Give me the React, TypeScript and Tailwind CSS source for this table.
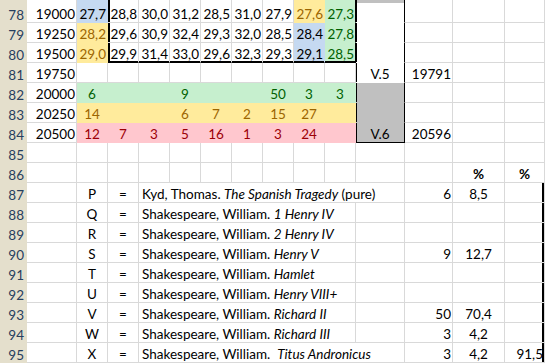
import React from 'react';

type Fill = 'n' | 'w' | 'b' | 'y' | 'g' | 'r' | 'k';
type Cell = {
  t?: React.ReactNode;
  a?: 'l' | 'r' | 'c';
  f?: Fill;
  s?: 7 | 8;
  bold?: boolean;
  rb?: boolean;
  bb?: boolean;
  sh?: string;
};

const BG: Record<Fill, string> = {
  n: 'bg-white',
  w: 'bg-white',
  b: 'bg-[#c5d9f1]',
  y: 'bg-[#ffeb9c]',
  g: 'bg-[#c6efce]',
  r: 'bg-[#ffc7ce]',
  k: 'bg-[#c0c0c0]',
};
const BR: Record<Fill, string> = {
  n: 'border-r-[#d9d9d9]',
  w: 'border-r-white',
  b: 'border-r-[#c5d9f1]',
  y: 'border-r-[#ffeb9c]',
  g: 'border-r-[#c6efce]',
  r: 'border-r-[#ffc7ce]',
  k: 'border-r-[#c0c0c0]',
};
const BB: Record<Fill, string> = {
  n: 'border-b-[#d9d9d9]',
  w: 'border-b-white',
  b: 'border-b-[#c5d9f1]',
  y: 'border-b-[#ffeb9c]',
  g: 'border-b-[#c6efce]',
  r: 'border-b-[#ffc7ce]',
  k: 'border-b-[#c0c0c0]',
};
const TC: Record<Fill, string> = {
  n: 'text-black',
  w: 'text-black',
  b: 'text-black',
  y: 'text-[#9c6500]',
  g: 'text-[#006100]',
  r: 'text-[#9c0006]',
  k: 'text-black',
};
const AL = {
  l: 'justify-start pl-[3px]',
  r: 'justify-end pr-[1px]',
  c: 'justify-center',
};
const SPAN = { 7: 'col-span-7', 8: 'col-span-8' };

const LEFT2 = 'shadow-[inset_2px_0_0_#000]';
const LEFT2B = 'shadow-[inset_2px_-1px_0_#000]';
const BOT1 = 'shadow-[inset_0_-1px_0_#000]';
const LEFT1 = 'shadow-[inset_1px_0_0_#000]';
const RIGHT2 = 'shadow-[inset_-2px_0_0_#000]';

const e = (): Cell => ({});

// Columns: B, C, D, E, F, G, H, I, J, K, L, M, N, O
const rows: { h: string; cells: Cell[] }[] = [
  {
    h: '',
    cells: [
      e(),
      { f: 'b' },
      { sh: LEFT2 },
      e(), e(), e(), e(), e(),
      { f: 'y' },
      { f: 'g', rb: true },
      { f: 'k', rb: true, sh: LEFT1 },
      e(), e(), e(),
    ],
  },
  {
    h: '78',
    cells: [
      { t: '19000', a: 'r' },
      { t: '27,7', a: 'r', f: 'b' },
      { t: '28,8', a: 'r', sh: LEFT2 },
      { t: '30,0', a: 'r' },
      { t: '31,2', a: 'r' },
      { t: '28,5', a: 'r' },
      { t: '31,0', a: 'r' },
      { t: '27,9', a: 'r' },
      { t: '27,6', a: 'r', f: 'y' },
      { t: '27,3', a: 'r', f: 'g', rb: true },
      { f: 'w', rb: true, sh: LEFT1 },
      e(), e(), e(),
    ],
  },
  {
    h: '79',
    cells: [
      { t: '19250', a: 'r' },
      { t: '28,2', a: 'r', f: 'y' },
      { t: '29,6', a: 'r', sh: LEFT2 },
      { t: '30,9', a: 'r' },
      { t: '32,4', a: 'r' },
      { t: '29,3', a: 'r' },
      { t: '32,0', a: 'r' },
      { t: '28,5', a: 'r' },
      { t: '28,4', a: 'r', f: 'b' },
      { t: '27,8', a: 'r', f: 'g', rb: true },
      { f: 'w', rb: true, sh: LEFT1 },
      e(), e(), e(),
    ],
  },
  {
    h: '80',
    cells: [
      { t: '19500', a: 'r' },
      { t: '29,0', a: 'r', f: 'y' },
      { t: '29,9', a: 'r', sh: LEFT2B, bb: true },
      { t: '31,4', a: 'r', sh: BOT1, bb: true },
      { t: '33,0', a: 'r', sh: BOT1, bb: true },
      { t: '29,6', a: 'r', sh: BOT1, bb: true },
      { t: '32,3', a: 'r', sh: BOT1, bb: true },
      { t: '29,3', a: 'r', sh: BOT1, bb: true },
      { t: '29,1', a: 'r', f: 'b', sh: BOT1, bb: true },
      { t: '28,5', a: 'r', f: 'g', rb: true, sh: BOT1, bb: true },
      { f: 'w', rb: true, sh: LEFT1 },
      e(), e(), e(),
    ],
  },
  {
    h: '81',
    cells: [
      { t: '19750', a: 'r' },
      e(), e(), e(), e(), e(), e(), e(), e(), e(),
      { t: 'V.5', a: 'c', f: 'w', rb: true, sh: LEFT1 },
      { t: '19791', a: 'r' },
      e(), e(),
    ],
  },
  {
    h: '82',
    cells: [
      { t: '20000', a: 'r' },
      { t: '6', a: 'c', f: 'g' },
      { f: 'g' },
      { f: 'g' },
      { t: '9', a: 'c', f: 'g' },
      { f: 'g' },
      { f: 'g' },
      { t: '50', a: 'c', f: 'g' },
      { t: '3', a: 'c', f: 'g' },
      { t: '3', a: 'c', f: 'g' },
      { f: 'k', rb: true, sh: LEFT1 },
      e(), e(), e(),
    ],
  },
  {
    h: '83',
    cells: [
      { t: '20250', a: 'r' },
      { t: '14', a: 'c', f: 'y' },
      { f: 'y' },
      { f: 'y' },
      { t: '6', a: 'c', f: 'y' },
      { t: '7', a: 'c', f: 'y' },
      { t: '2', a: 'c', f: 'y' },
      { t: '15', a: 'c', f: 'y' },
      { t: '27', a: 'c', f: 'y' },
      { f: 'y' },
      { f: 'k', rb: true, sh: LEFT1 },
      e(), e(), e(),
    ],
  },
  {
    h: '84',
    cells: [
      { t: '20500', a: 'r' },
      { t: '12', a: 'c', f: 'r' },
      { t: '7', a: 'c', f: 'r' },
      { t: '3', a: 'c', f: 'r' },
      { t: '5', a: 'c', f: 'r' },
      { t: '16', a: 'c', f: 'r' },
      { t: '1', a: 'c', f: 'r' },
      { t: '3', a: 'c', f: 'r' },
      { t: '24', a: 'c', f: 'r' },
      { f: 'r' },
      { t: 'V.6', a: 'c', f: 'k', rb: true, bb: true, sh: LEFT1 },
      { t: '20596', a: 'r' },
      e(), e(),
    ],
  },
  {
    h: '85',
    cells: [e(), e(), e(), e(), e(), e(), e(), e(), e(), e(), e(), e(), e(), e()],
  },
  {
    h: '86',
    cells: [
      e(), e(), e(), e(), e(), e(), e(), e(), e(), e(), e(), e(),
      { t: '%', a: 'c', bold: true },
      { t: '%', a: 'c', bold: true },
    ],
  },
];

const titles: { l: string; title: React.ReactNode; span: 7 | 8; m?: string; n?: string; o?: string }[] = [
  { l: 'P', title: <>Kyd, Thomas. <i>The Spanish Tragedy</i> (pure)</>, span: 8, m: '6', n: '8,5' },
  { l: 'Q', title: <>Shakespeare, William. <i>1 Henry IV</i></>, span: 7 },
  { l: 'R', title: <>Shakespeare, William. <i>2 Henry IV</i></>, span: 7 },
  { l: 'S', title: <>Shakespeare, William. <i>Henry V</i></>, span: 7, m: '9', n: '12,7' },
  { l: 'T', title: <>Shakespeare, William. <i>Hamlet</i></>, span: 7 },
  { l: 'U', title: <>Shakespeare, William. <i>Henry VIII+</i></>, span: 7 },
  { l: 'V', title: <>Shakespeare, William. <i>Richard II</i></>, span: 7, m: '50', n: '70,4' },
  { l: 'W', title: <>Shakespeare, William. <i>Richard III</i></>, span: 7, m: '3', n: '4,2' },
  { l: 'X', title: <>Shakespeare, William.{'\u00a0 '}<i>Titus Andronicus</i></>, span: 8, m: '3', n: '4,2', o: '91,5' },
];

titles.forEach((r, i) => {
  const cells: Cell[] = [
    e(),
    { t: r.l, a: 'c' },
    { t: '=', a: 'c' },
    { t: r.title, a: 'l', s: r.span },
  ];
  if (r.span === 7) cells.push(e());
  cells.push({ t: r.m, a: 'r' });
  cells.push({ t: r.n, a: 'c' });
  cells.push({ t: r.o, a: 'r', sh: RIGHT2 });
  rows.push({ h: String(87 + i), cells });
});

function CellView({ c }: { c: Cell }) {
  const f: Fill = c.f ?? 'n';
  const cls = [
    'flex items-center pt-[3px] border-r border-b whitespace-nowrap overflow-visible leading-[16px]',
    BG[f],
    c.rb ? 'border-r-black' : BR[f],
    c.bb ? 'border-b-black' : BB[f],
    TC[f],
    AL[c.a ?? 'l'],
    c.s ? SPAN[c.s] : '',
    c.bold ? 'font-bold' : '',
    c.sh ?? '',
  ].join(' ');
  return (
    <div className={cls}>
      <span className="relative z-10">{c.t}</span>
    </div>
  );
}

export default function App() {
  return (
    <div
      className="w-[545px] h-[363px] overflow-hidden bg-white text-[13.5px]"
      style={{ fontFamily: 'Lato, "Open Sans", sans-serif' }}
    >
      <div className="grid grid-cols-[27px_50px_repeat(9,31px)_49px_48px_52px_40px] grid-rows-[3px_repeat(18,20px)]">
        {rows.map((row, ri) => (
          <React.Fragment key={ri}>
            <div className="flex items-center justify-end pr-[3px] pt-[3px] bg-[#e4dfcc] text-[#27405f] leading-[16px]">
              {row.h}
            </div>
            {row.cells.map((c, ci) => (
              <CellView key={ci} c={c} />
            ))}
          </React.Fragment>
        ))}
      </div>
    </div>
  );
}
